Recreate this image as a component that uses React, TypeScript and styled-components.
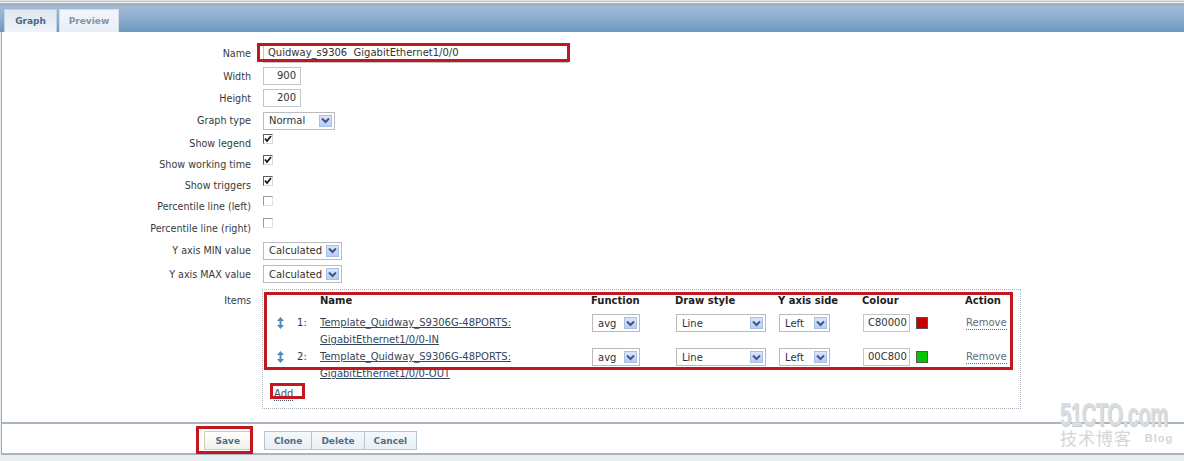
import styled, { createGlobalStyle } from 'styled-components'

const FONT = `"DejaVu Sans", Verdana, sans-serif`

const GlobalStyle = createGlobalStyle`
	html, body {
		margin: 0;
		padding: 0;
		background: #e8edf0;
		font-family: ${FONT};
	}
`

type ItemType = {
	num: number
	line1: string
	line2: string
	colour: string
	swatch: string
}

const items: ItemType[] = [
	{
		num: 1,
		line1: 'Template_Quidway_S9306G-48PORTS:',
		line2: 'GigabitEthernet1/0/0-IN',
		colour: 'C80000',
		swatch: '#c80000',
	},
	{
		num: 2,
		line1: 'Template_Quidway_S9306G-48PORTS:',
		line2: 'GigabitEthernet1/0/0-OUT',
		colour: '00C800',
		swatch: '#00c800',
	},
]

function DropArrow() {
	return (
		<ArrowBox>
			<svg width='9' height='7' viewBox='0 0 9 7'>
				<path d='M1 1.5 L4.5 5 L8 1.5' fill='none' stroke='#3f5583' strokeWidth='2' />
			</svg>
		</ArrowBox>
	)
}

function Select(props: { value: string; width: number }) {
	return (
		<StyledSelect $w={props.width}>
			<span>{props.value}</span>
			<DropArrow />
		</StyledSelect>
	)
}

function Check(props: { checked?: boolean }) {
	return (
		<CheckBox $checked={props.checked}>
			{props.checked && (
				<svg width='8' height='8' viewBox='0 0 8 8'>
					<path d='M1 3.5 L3 6 L7 1' fill='none' stroke='#1b1b1b' strokeWidth='1.8' />
				</svg>
			)}
		</CheckBox>
	)
}

function MoveIcon() {
	return (
		<svg width='7' height='12' viewBox='0 0 7 12'>
			<path d='M3.5 0 L7 4 L4.5 4 L4.5 8 L7 8 L3.5 12 L0 8 L2.5 8 L2.5 4 L0 4 Z' fill='#4b8cc0' />
		</svg>
	)
}

export default function App() {
	return (
		<Page>
			<GlobalStyle />
			<TopStripes />
			<TabBar>
				<Tab $active>Graph</Tab>
				<Tab>Preview</Tab>
			</TabBar>
			<Panel>
				<FormRow $h={23}>
					<Label>Name</Label>
					<Field>
						<Annotated>
							<TextInput $w={305} $lh={14}>
								Quidway_s9306  GigabitEthernet1/0/0
							</TextInput>
							<RedMark $l={-6} $t={-2} $w={313} $h={19} />
						</Annotated>
					</Field>
				</FormRow>
				<FormRow $h={22}>
					<Label>Width</Label>
					<Field>
						<TextInput $w={38} $right>
							900
						</TextInput>
					</Field>
				</FormRow>
				<FormRow $h={22}>
					<Label>Height</Label>
					<Field>
						<TextInput $w={38} $right>
							200
						</TextInput>
					</Field>
				</FormRow>
				<FormRow $h={23}>
					<Label>Graph type</Label>
					<Field>
						<Select value='Normal' width={72} />
					</Field>
				</FormRow>
				<FormRow $h={22}>
					<Label>Show legend</Label>
					<CheckField $mt={2}>
						<Check checked />
					</CheckField>
				</FormRow>
				<FormRow $h={21}>
					<Label>Show working time</Label>
					<CheckField $mt={1}>
						<Check checked />
					</CheckField>
				</FormRow>
				<FormRow $h={21}>
					<Label>Show triggers</Label>
					<CheckField $mt={1}>
						<Check checked />
					</CheckField>
				</FormRow>
				<FormRow $h={21}>
					<Label>Percentile line (left)</Label>
					<CheckField $mt={0}>
						<Check />
					</CheckField>
				</FormRow>
				<FormRow $h={22}>
					<Label>Percentile line (right)</Label>
					<CheckField $mt={1}>
						<Check />
					</CheckField>
				</FormRow>
				<FormRow $h={23}>
					<Label>Y axis MIN value</Label>
					<Field>
						<Select value='Calculated' width={79} />
					</Field>
				</FormRow>
				<FormRow $h={24}>
					<Label>Y axis MAX value</Label>
					<Field>
						<Select value='Calculated' width={79} />
					</Field>
				</FormRow>
				<ItemsRow>
					<Label $top>Items</Label>
					<ItemsBox>
						<ItemsGrid $h={24}>
							<span />
							<span />
							<HeadCell>Name</HeadCell>
							<HeadCell>Function</HeadCell>
							<HeadCell>Draw style</HeadCell>
							<HeadCell>Y axis side</HeadCell>
							<HeadCell>Colour</HeadCell>
							<HeadCell>Action</HeadCell>
						</ItemsGrid>
						{items.map((item) => (
							<ItemsGrid $h={34} key={item.num}>
								<MoveCell>
									<MoveIcon />
								</MoveCell>
								<NumCell>{item.num}:</NumCell>
								<ItemLink>
									<span>{item.line1}</span>
									<span>{item.line2}</span>
								</ItemLink>
								<SelectCell>
									<Select value='avg' width={48} />
								</SelectCell>
								<SelectCell>
									<Select value='Line' width={90} />
								</SelectCell>
								<SelectCell>
									<Select value='Left' width={51} />
								</SelectCell>
								<ColourCell>
									<ColourInput>{item.colour}</ColourInput>
									<Swatch $c={item.swatch} />
								</ColourCell>
								<RemoveCell>
									<RemoveLink>Remove</RemoveLink>
								</RemoveCell>
							</ItemsGrid>
						))}
						<AddLink>Add</AddLink>
						<RedMark $l={1} $t={2} $w={749} $h={78} />
						<RedMark $l={7} $t={93} $w={35} $h={16} />
					</ItemsBox>
				</ItemsRow>
			</Panel>
			<Footer>
				<SaveSlot>
					<Annotated>
						<Button $primary>Save</Button>
						<RedMark $l={-8} $t={-5} $w={57} $h={28} />
					</Annotated>
				</SaveSlot>
				<ButtonGroup>
					<Button>Clone</Button>
					<Button>Delete</Button>
					<Button>Cancel</Button>
				</ButtonGroup>
			</Footer>
			<Watermark>
				<WatermarkBrand>51CTO.com</WatermarkBrand>
				<WatermarkSub>
					技术博客 <small>Blog</small>
				</WatermarkSub>
			</Watermark>
		</Page>
	)
}

const Page = styled.div`
	position: relative;
	width: 1184px;
	height: 461px;
	overflow: hidden;
	color: #333;
`

const TopStripes = styled.div`
	height: 7px;
	background: linear-gradient(
		to bottom,
		#dde3e8 0px,
		#dde3e8 1px,
		#b9c2cb 1px,
		#b9c2cb 2px,
		#f4f6f8 2px,
		#f4f6f8 3px,
		#a7afb9 3px,
		#a7afb9 5px,
		#9eb3cc 5px,
		#9fb7d4 7px
	);
`

const TabBar = styled.div`
	height: 25px;
	display: flex;
	align-items: flex-end;
	gap: 2px;
	padding-left: 4px;
	background: linear-gradient(to bottom, #9fb9d9 0%, #93b0d1 35%, #769fc6 85%, #6f95bb 100%);
`

const Tab = styled.div<{ $active?: boolean }>`
	height: 23px;
	width: ${(p) => (p.$active ? '53px' : '60px')};
	box-sizing: border-box;
	display: flex;
	align-items: center;
	justify-content: center;
	font-size: 9px;
	font-weight: bold;
	color: ${(p) => (p.$active ? '#4a6684' : '#7d95ad')};
	background: ${(p) =>
		p.$active ? 'linear-gradient(to bottom, #dfe8f1, #eef3f7)' : 'linear-gradient(to bottom, #f3f6f9, #e9eff5)'};
	border: 1px solid ${(p) => (p.$active ? '#c4d3e1' : '#d2dde7')};
	border-bottom: none;
`

const Panel = styled.div`
	background: #fff;
	margin-left: 1px;
	border-left: 1px solid #9eabb7;
	border-bottom: 2px solid #a8b5c1;
	padding: 10px 0 13px;
`

const FormRow = styled.div<{ $h: number }>`
	height: ${(p) => p.$h}px;
	display: grid;
	grid-template-columns: 249px 1fr;
	column-gap: 12px;
	align-items: center;
`

const Label = styled.div<{ $top?: boolean }>`
	text-align: right;
	font-size: 9.6px;
	color: #3a3a3a;
	white-space: nowrap;
	align-self: ${(p) => (p.$top ? 'start' : 'center')};
	padding-top: ${(p) => (p.$top ? '6px' : '0')};
`

const Field = styled.div`
	display: flex;
	align-items: center;
`

const CheckField = styled.div<{ $mt: number }>`
	align-self: start;
	margin-top: ${(p) => p.$mt}px;
	display: flex;
`

const Annotated = styled.div`
	position: relative;
	display: inline-flex;
`

const RedMark = styled.div<{ $l: number; $t: number; $w: number; $h: number }>`
	position: absolute;
	left: ${(p) => p.$l}px;
	top: ${(p) => p.$t}px;
	width: ${(p) => p.$w}px;
	height: ${(p) => p.$h}px;
	box-sizing: border-box;
	border: 3px solid #c3161f;
	pointer-events: none;
`

const TextInput = styled.div<{ $w: number; $right?: boolean; $lh?: number }>`
	width: ${(p) => p.$w}px;
	height: 18px;
	box-sizing: border-box;
	border: 1px solid #c3c6c9;
	background: #fff;
	font-size: 10px;
	line-height: ${(p) => p.$lh ?? 16}px;
	color: #333;
	white-space: pre;
	padding: 0 4px;
	text-align: ${(p) => (p.$right ? 'right' : 'left')};
`

const StyledSelect = styled.div<{ $w: number }>`
	width: ${(p) => p.$w}px;
	height: 18px;
	box-sizing: border-box;
	border: 1px solid #b8bcbf;
	background: #fff;
	display: flex;
	align-items: center;
	justify-content: space-between;
	padding: 0 2px 0 5px;
	font-size: 10px;
	color: #333;
`

const ArrowBox = styled.span`
	width: 13px;
	height: 12px;
	box-sizing: border-box;
	border: 1px solid #a9bfe3;
	background: linear-gradient(to bottom, #dbe6fb, #b9cdf2);
	display: flex;
	align-items: center;
	justify-content: center;
`

const CheckBox = styled.span<{ $checked?: boolean }>`
	width: 10px;
	height: 10px;
	box-sizing: border-box;
	border-style: solid;
	border-width: 1px;
	border-color: ${(p) => (p.$checked ? '#5e5e5e #d8d8d8 #d8d8d8 #5e5e5e' : '#9a9a9a #e2e2e2 #e2e2e2 #9a9a9a')};
	background: #fff;
	display: flex;
	align-items: center;
	justify-content: center;
`

const ItemsRow = styled.div`
	display: grid;
	grid-template-columns: 249px 1fr;
	column-gap: 12px;
	padding-top: 3px;
`

const ItemsBox = styled.div`
	position: relative;
	width: 759px;
	box-sizing: border-box;
	border: 1px dotted #aab3bc;
	padding: 0 0 7px;
	margin-left: -1px;
`

const ItemsGrid = styled.div<{ $h: number }>`
	height: ${(p) => p.$h}px;
	display: grid;
	grid-template-columns: 25px 23px 271px 84px 103px 84px 103px 1fr;
	padding-left: 9px;
	align-items: start;
	font-size: 10px;
	line-height: 17px;
`

const HeadCell = styled.div`
	font-weight: bold;
	color: #1e1e1e;
	padding-top: 2px;
	white-space: nowrap;
`

const MoveCell = styled.div`
	padding: 3px 0 0 5px;
	display: flex;
`

const NumCell = styled.div`
	color: #333;
`

const ItemLink = styled.a`
	display: flex;
	flex-direction: column;
	color: #34465c;
	text-decoration: underline;
	white-space: nowrap;
	cursor: pointer;
`

const SelectCell = styled.div`
	padding: 0 0 0 1px;
`

const ColourCell = styled.div`
	display: flex;
	align-items: center;
	gap: 6px;
	padding-left: 1px;
`

const ColourInput = styled.div`
	width: 47px;
	height: 18px;
	box-sizing: border-box;
	border: 1px solid #c3c6c9;
	padding-left: 4px;
	font-size: 10px;
	line-height: 16px;
	color: #333;
`

const Swatch = styled.span<{ $c: string }>`
	width: 12px;
	height: 12px;
	box-sizing: border-box;
	border: 1px solid #555;
	background: ${(p) => p.$c};
`

const RemoveCell = styled.div`
	padding-left: 1px;
`

const RemoveLink = styled.span`
	color: #5b6c7e;
	border-bottom: 1px dotted #5b6c7e;
	line-height: 13px;
	display: inline-block;
	cursor: pointer;
`

const AddLink = styled.span`
	display: inline-block;
	margin: 2px 0 0 11px;
	font-size: 10px;
	line-height: 13px;
	color: #44556a;
	border-bottom: 1px dotted #44556a;
`

const Footer = styled.div`
	height: 31px;
	box-sizing: border-box;
	background: #fff;
	margin-left: 1px;
	border-left: 1px solid #9eabb7;
	border-bottom: 2px solid #a8b5c1;
	display: grid;
	grid-template-columns: 249px 1fr;
	column-gap: 12px;
	align-items: start;
	padding-top: 7px;
`

const SaveSlot = styled.div`
	display: flex;
	justify-content: flex-end;
`

const ButtonGroup = styled.div`
	display: flex;
	margin-left: 1px;
`

const Button = styled.button<{ $primary?: boolean }>`
	height: 19px;
	box-sizing: border-box;
	padding: 0 ${(p) => (p.$primary ? '10px' : '9px')};
	font-family: ${FONT};
	font-size: 9px;
	font-weight: bold;
	color: #536d86;
	border: 1px solid ${(p) => (p.$primary ? '#d7ccb4' : '#b8c4cf')};
	background: ${(p) =>
		p.$primary ? 'linear-gradient(to bottom, #ffffff, #f3f1ea)' : 'linear-gradient(to bottom, #f6f9fb, #e9eff4)'};
	cursor: pointer;
	& + & {
		border-left: none;
	}
`

const Watermark = styled.div`
	position: absolute;
	left: 1060px;
	top: 400px;
	display: flex;
	flex-direction: column;
	align-items: flex-start;
	pointer-events: none;
`

const WatermarkBrand = styled.div`
	font-family: 'Liberation Sans', sans-serif;
	font-weight: bold;
	font-size: 34px;
	line-height: 28px;
	height: 28px;
	letter-spacing: -1px;
	color: #dadde0;
	transform: scaleX(0.6);
	transform-origin: left center;
	text-shadow: 1px 1px 0 #c9cdd1;
	white-space: nowrap;
`

const WatermarkSub = styled.div`
	font-family: 'Noto Sans CJK SC', sans-serif;
	font-size: 17px;
	line-height: 20px;
	color: #d3d6d9;
	letter-spacing: 1px;
	white-space: nowrap;

	small {
		font-family: 'Liberation Sans', sans-serif;
		font-size: 11px;
		font-weight: bold;
		margin-left: 8px;
		vertical-align: top;
	}
`
